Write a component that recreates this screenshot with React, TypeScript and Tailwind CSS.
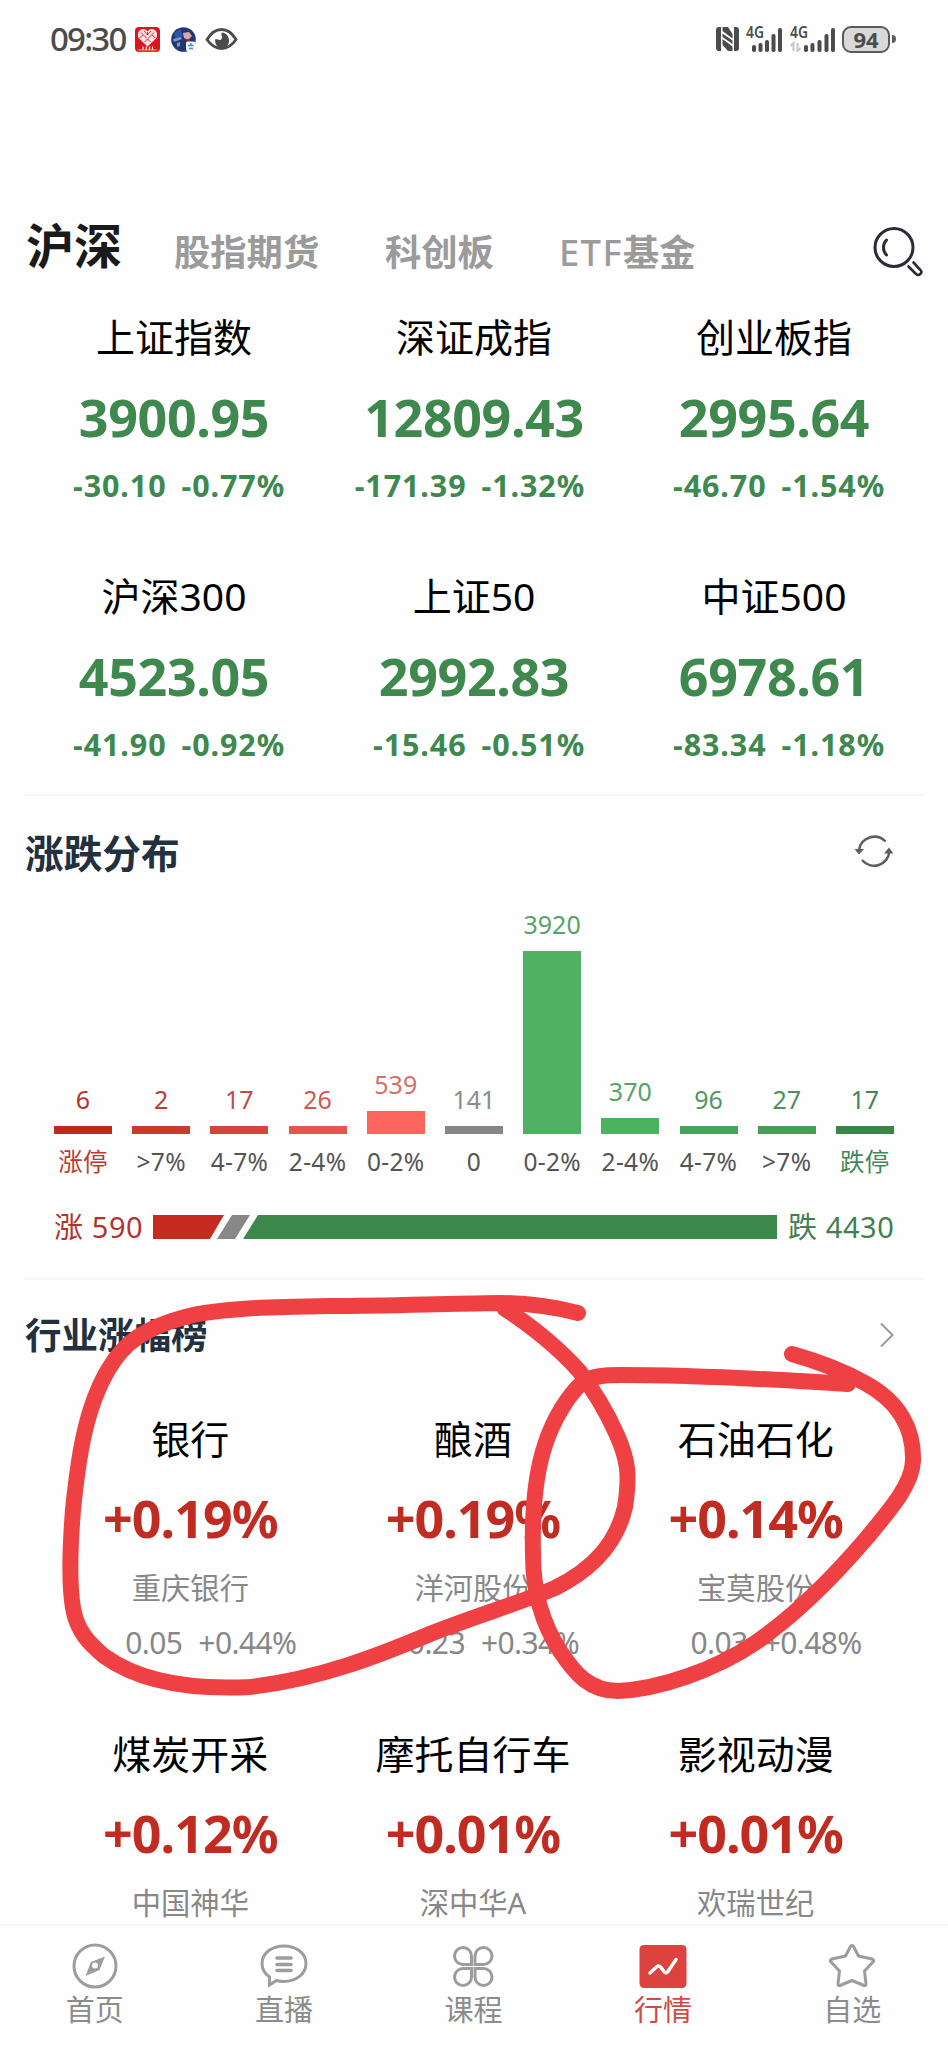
import React from "react";

type IndexItem = {
  name: string;
  value: string;
  diff: string;
  percent: string;
};

type IndustryItem = {
  name: string;
  percent: string;
  leader: string;
  diff?: string;
  leaderPercent?: string;
};

type BarItem = {
  count: number;
  label: string;
  height: number;
  bar: string;
  text: string;
  labelColor: string;
};

const indexes: IndexItem[] = [
  { name: "上证指数", value: "3900.95", diff: "-30.10", percent: "-0.77%" },
  { name: "深证成指", value: "12809.43", diff: "-171.39", percent: "-1.32%" },
  { name: "创业板指", value: "2995.64", diff: "-46.70", percent: "-1.54%" },
  { name: "沪深300", value: "4523.05", diff: "-41.90", percent: "-0.92%" },
  { name: "上证50", value: "2992.83", diff: "-15.46", percent: "-0.51%" },
  { name: "中证500", value: "6978.61", diff: "-83.34", percent: "-1.18%" },
];

const bars: BarItem[] = [
  { count: 6, label: "涨停", height: 8, bar: "bg-[#c1281d]", text: "text-[#b3332b]", labelColor: "text-[#bd3a32]" },
  { count: 2, label: ">7%", height: 8, bar: "bg-[#cb3a2f]", text: "text-[#b8403a]", labelColor: "text-[#555]" },
  { count: 17, label: "4-7%", height: 8, bar: "bg-[#d5453c]", text: "text-[#bf4c46]", labelColor: "text-[#555]" },
  { count: 26, label: "2-4%", height: 8, bar: "bg-[#e5554c]", text: "text-[#cf5a55]", labelColor: "text-[#555]" },
  { count: 539, label: "0-2%", height: 23, bar: "bg-[#fd665e]", text: "text-[#d4716c]", labelColor: "text-[#555]" },
  { count: 141, label: "0", height: 8, bar: "bg-[#868686]", text: "text-[#8c8c8c]", labelColor: "text-[#555]" },
  { count: 3920, label: "0-2%", height: 183, bar: "bg-[#50b063]", text: "text-[#57a468]", labelColor: "text-[#555]" },
  { count: 370, label: "2-4%", height: 16, bar: "bg-[#4cb25f]", text: "text-[#57a468]", labelColor: "text-[#555]" },
  { count: 96, label: "4-7%", height: 8, bar: "bg-[#48a25a]", text: "text-[#52985f]", labelColor: "text-[#555]" },
  { count: 27, label: ">7%", height: 8, bar: "bg-[#479c58]", text: "text-[#4e905b]", labelColor: "text-[#555]" },
  { count: 17, label: "跌停", height: 8, bar: "bg-[#3b8549]", text: "text-[#458453]", labelColor: "text-[#45875a]" },
];

const industries: IndustryItem[] = [
  { name: "银行", percent: "+0.19%", leader: "重庆银行", diff: "0.05", leaderPercent: "+0.44%" },
  { name: "酿酒", percent: "+0.19%", leader: "洋河股份", diff: "0.23", leaderPercent: "+0.34%" },
  { name: "石油石化", percent: "+0.14%", leader: "宝莫股份", diff: "0.03", leaderPercent: "+0.48%" },
  { name: "煤炭开采", percent: "+0.12%", leader: "中国神华" },
  { name: "摩托自行车", percent: "+0.01%", leader: "深中华A" },
  { name: "影视动漫", percent: "+0.01%", leader: "欢瑞世纪" },
];

const SignalBars: React.FC<{ xs: number[] }> = ({ xs }) => (
  <>
    {[7, 9, 12, 18, 24].map((h, i) => (
      <rect key={h} x={xs[i]} y={25 - h} width="4" height={h} rx="1.8" />
    ))}
  </>
);

const StatusBar = () => (
  <div className="flex h-[78px] items-center justify-between pl-[50px] pr-[52px] text-[#4c4c4c]">
    <div className="flex items-center">
      <span className="w-[85px] text-[33px] font-medium leading-10 tracking-[-1.800px]">09:30</span>
      <svg width="25" height="25" viewBox="0 0 25 25">
        <rect width="25" height="25" rx="4" fill="#dc1420" />
        <path d="M12.5 19.500 4 11.500C1 7.500 4 2 8 2c2 0 3.500 1 4.500 2.500C13.500 3 15 2 17 2c4 0 7 5.500 4 9.500z" fill="#fbe4e2" />
        <path d="M6 5.500l6 6M9 4l3.500 4M19 5.500l-6 6M16 4l-3.500 4M9.500 15l3-3 3 3M4.500 11l3.500-3M20.500 11L17 8M12.500 5v3" stroke="#dc1420" strokeWidth="0.9" fill="none" />
        <path d="M2 22h21l-2 2.500H4z" fill="#ee5a3c" />
        <path d="M8 19.500v3.500M11.300 19.500v3.500M14.500 19.500v3.500M17.500 19.500v3.500" stroke="#fff" strokeWidth="1.200" />
      </svg>
      <svg className="ml-[11px]" width="25" height="25" viewBox="0 0 25 25">
        <circle cx="12.500" cy="12.500" r="12.300" fill="#23366f" />
        <path d="M3 6l6-4 3 7-7 4z" fill="#2e55ad" />
        <path d="M12 6l6-1 3 4-4 4-4-2z" fill="#dfa6a2" />
        <path d="M2 12l8-2 1 2-8 3zM6 16l3-1v4l-3 1z" fill="#7f93c9" />
        <path d="M16 12l4 1-2 4-3-1z" fill="#8f2f38" />
        <rect x="15" y="14.500" width="9.500" height="9.500" rx="1.500" fill="#eef4fb" />
        <path d="M19.800 16v2M17 18.500h5.500M18 21.500h4" stroke="#4b8fd8" strokeWidth="1.500" />
      </svg>
      <svg className="ml-[9px]" width="33" height="25" viewBox="0 0 33 25">
        <path d="M2 12.500C6 6 11 2.500 16.500 2.500S27 6 31 12.500C27 18.500 22 21.500 16.500 21.500S6 18.500 2 12.500z" fill="none" stroke="currentColor" strokeWidth="2.800" />
        <path d="M17 5.500c-2 3 2 4.500-1 7-2 1.500-3.500-1-6 0 0 5 2.500 8.500 7 8.500 4.500 0 7-3.500 7-7.500 0-4.500-3-7.500-7-8z" fill="currentColor" />
      </svg>
    </div>

    <div className="flex items-center">
      <svg width="23" height="24" viewBox="0 0 23 24" fill="currentColor">
        <path d="M3 0h2v24H3a3 3 0 0 1-3-3V3a3 3 0 0 1 3-3zM18 0h2a3 3 0 0 1 3 3v18a3 3 0 0 1-3 3h-2z" />
        <path d="M6.500 0H12l4.500 7v4.500L6.500 4zM6.500 6.500l10 7v3.500l-10-7zM6.500 12l10 7.500V24H12l-5.500-6z" />
      </svg>
      <svg className="mb-3 ml-[7px]" width="38" height="37" viewBox="0 -12 38 37" fill="currentColor">
        <text x="0" y="11" fontSize="16" fontWeight="600" textLength="18" lengthAdjust="spacingAndGlyphs">4G</text>
        <SignalBars xs={[6, 12.5, 19, 25.5, 32]} />
      </svg>
      <svg className="mb-3 ml-[6px]" width="47" height="37" viewBox="0 -12 47 37" fill="currentColor">
        <text x="0" y="11" fontSize="16" fontWeight="600" textLength="18" lengthAdjust="spacingAndGlyphs">4G</text>
        <path d="M3.500 24v-8l-3 3M7.500 16v8l3-3" fill="none" stroke="#c6c6c6" strokeWidth="2" />
        <SignalBars xs={[14, 20.5, 27.5, 34.5, 41]} />
      </svg>
      <div className="ml-[5px] flex h-[27px] w-[48px] items-center justify-center rounded-[9px] border-2 border-[#5a5a5a] bg-[#d9d9d9] text-[22px] font-bold leading-none">
        94
      </div>
      <div className="ml-[2px] h-2 w-1 rounded-r bg-[#5a5a5a]" />
    </div>
  </div>
);

const MarketTabs = () => (
  <div className="mt-[133px] flex h-[70px] items-center pl-[26px] pr-6">
    <span className="w-[148px] text-[48px] font-bold leading-[60px] text-[#1a1a1a]">沪深</span>
    <div className="mt-3 flex h-[50px] flex-1 items-center text-[36.300px] font-bold leading-[50px] text-[#9b9b9b]">
      <span className="w-[211px]">股指期货</span>
      <span className="w-[174px]">科创板</span>
      <span>
        <span className="font-medium tracking-[1.400px]">ETF</span>基金
      </span>
    </div>
    <svg className="mt-3" width="52" height="52" viewBox="0 0 52 52" fill="none" stroke="#2b2b3a" strokeWidth="3" strokeLinecap="round">
      <circle cx="22" cy="21.500" r="19" />
      <path d="M14.500 14c-4 4-4 11 0 15" />
      <path d="M36.500 40.500l7.500 7.500c3 2.500 7-1 4.500-4l-7-7.500" strokeWidth="2.600" />
    </svg>
  </div>
);

const IndexCell: React.FC<{ item: IndexItem }> = ({ item }) => (
  <div className="text-center text-[#3f894f]">
    <div className="text-[39px] leading-[60px] text-black">{item.name}</div>
    <div className="mt-5 text-[52px] font-bold leading-[60px] tracking-[-0.400px]">{item.value}</div>
    <div className="mt-[18px] grid grid-cols-2 gap-[15px] text-[30.500px] font-bold leading-10 tracking-[0.900px]">
      <span className="flex justify-end">{item.diff}</span>
      <span className="flex">{item.percent}</span>
    </div>
  </div>
);

const Distribution = () => (
  <section>
    <div className="mt-[27px] flex h-[60px] items-center justify-between pl-[25px] pr-[54px]">
      <h2 className="text-[38.700px] font-bold leading-[60px] text-[#22303f]">涨跌分布</h2>
      <svg className="mb-1" width="40" height="36" viewBox="0 0 40 36" fill="none" stroke="#5f5f5f" strokeWidth="2.500">
        <path d="M31.500 8.500A15.500 15.500 0 0 0 5 17" />
        <path d="M8 27a15.500 15.500 0 0 0 27.500-9" />
        <path d="M.500 16h9.500L5 21.500zM30 20.500h9.500L35 14.500z" fill="#5f5f5f" stroke="none" />
      </svg>
    </div>

    {/* COUNT BARS */}
    <div className="flex h-[251px] items-end justify-between px-[54px]">
      {bars.map((item, i) => (
        <div key={i} className="flex w-[58px] flex-col items-center">
          <span className={`mb-[11px] text-[25px] leading-8 ${item.text}`}>{item.count}</span>
          <div className={`w-full ${item.bar}`} style={{ height: item.height }} />
        </div>
      ))}
    </div>
    <div className="mt-2 flex justify-between px-[54px]">
      {bars.map((item, i) => (
        <span
          key={i}
          className={`flex w-[58px] justify-center whitespace-nowrap text-[24.500px] leading-10 tracking-[0.300px] ${item.labelColor}`}
        >
          {item.label}
        </span>
      ))}
    </div>

    {/* UP / DOWN RATIO */}
    <div className="mt-[25px] flex h-10 items-center pl-[54px] text-[29px] leading-10 tracking-[0.600px]">
      <span className="w-[99px] text-[#b3342c]">涨 590</span>
      <svg width="624" height="24" viewBox="0 0 624 24">
        <path d="M0 0h71L57 24H0z" fill="#c62b1f" />
        <path d="M79 0h18L82 24H64z" fill="#888" />
        <path d="M105 0h519v24H90z" fill="#3d884b" />
      </svg>
      <span className="ml-[11px] text-[#437f50]">跌 4430</span>
    </div>
  </section>
);

const IndustryCell: React.FC<{ item: IndustryItem }> = ({ item }) => (
  <div className="text-center text-[#888]">
    <div className="text-[39px] leading-[60px] text-black">{item.name}</div>
    <div className="mt-[19px] text-[52px] font-bold leading-[60px] tracking-[-1px] text-[#c12c22]">{item.percent}</div>
    <div className="mt-5 text-[29.300px] leading-10">{item.leader}</div>
    <div className="mt-[15px] grid h-10 grid-cols-2 gap-4 text-[30px] leading-10 tracking-[-0.600px]">
      <span className="flex justify-end">{item.diff}</span>
      <span className="flex">{item.leaderPercent}</span>
    </div>
  </div>
);

/* hand-drawn marker circles laid over the industry list */
const MarkerStrokes = () => (
  <svg
    className="pointer-events-none absolute left-0 top-[1280px]"
    width="948"
    height="440"
    viewBox="0 0 948 440"
    fill="none"
    stroke="#ef4143"
    strokeWidth="16"
    strokeLinecap="round"
    strokeLinejoin="round"
  >
    <path d="M578 33C550 26 525 23 500 23C430 24 390 26 330 26C270 27 220 28 185 37C145 48 124 62 108 90C85 129 78 180 73 230C69 280 70 310 73 328C77 352 90 364 104 376C140 402 190 410 250 407C320 399 380 375 430 354C475 336 520 323 555 308C595 288 617 262 625 227C630 195 628 180 617 155C605 128 594 112 580 92C560 69 528 43 505 29" />
    <path d="M792 74C820 82 845 92 865 103C900 122 914 150 913 181C912 205 890 230 865 260C835 295 800 332 755 363C715 390 660 409 618 411C590 411 575 394 560 371C540 340 533 305 533 275C532 235 535 195 545 165C553 140 568 115 583 102C593 96 605 95 620 95C690 95 770 99 848 104" />
  </svg>
);

const tabs = [
  {
    label: "首页",
    active: false,
    icon: (
      <>
        <circle cx="24" cy="24" r="21" />
        <path d="M34 14.500L28.500 28 14.500 34 20 20zM24 20.500a3 3 0 1 0 0 6 3 3 0 0 0 0-6z" fill="currentColor" fillRule="evenodd" stroke="none" />
      </>
    ),
  },
  {
    label: "直播",
    active: false,
    icon: (
      <>
        <path d="M9.500 35C4.500 31.500 2 27 2 21.500 2 11 12 4 24 4s22 7 22 17.500S36 39.500 24 39.500c-3 0-5.500-.300-7.500-1L9.500 43z" />
        <path d="M17 16h14M17 22.500h14M17 28.500h14" strokeWidth="3.600" strokeLinecap="round" />
      </>
    ),
  },
  {
    label: "课程",
    active: false,
    icon: (
      <path d="M22.500 22.500H14a8.500 8.500 0 1 1 8.500-8.500zM26 22.500h8.500a8.500 8.500 0 1 0-8.500-8.500zM22.500 26.500H14a8.500 8.500 0 1 0 8.500 8.500zM26 26.500h8.500a8.500 8.500 0 1 1-8.500 8.500z" />
    ),
  },
  {
    label: "行情",
    active: true,
    icon: (
      <>
        <rect x="0.500" y="3" width="47" height="43" rx="4.500" fill="#dc423e" stroke="none" />
        <path d="M11 31l7-6.500c1.500-1 2.500-.500 3.500.500l4 5c1 1 2.500 1 3.500-.500L37 17.500" stroke="#fff" strokeWidth="3.400" strokeLinecap="round" />
      </>
    ),
  },
  {
    label: "自选",
    active: false,
    icon: (
      <path d="M22.500 4.500c.700-1.500 2.300-1.500 3 0l5 9.500 13.500 3c2 .500 2 2 1 3L36.500 29l1.500 13c.200 1.500-1 2-2 1.500L24 38.500 12 43.500c-1 .500-2.200 0-2-1.500l1.500-13L3 20c-1-1-1-2.500 1-3l13.500-3z" strokeLinejoin="round" />
    ),
  },
];

const BottomNav = () => (
  <nav className="mr-px grid h-[122px] grid-cols-5">
    {tabs.map((tab) => (
      <div
        key={tab.label}
        className={`flex flex-col items-center pt-4 ${tab.active ? "text-[#cf4b47]" : "text-[#8c8c8c]"}`}
      >
        <svg
          width="48"
          height="48"
          viewBox="0 0 48 48"
          fill="none"
          stroke="currentColor"
          strokeWidth="3"
          className={tab.active ? "" : "text-[#9d9d9d]"}
        >
          {tab.icon}
        </svg>
        <span className="text-[29px] leading-10">{tab.label}</span>
      </div>
    ))}
  </nav>
);

const Divider = () => <div className="mx-6 h-[2px] bg-[#f8f8f8]" />;

const App: React.FC = () => {
  return (
    <div className="relative h-[2048px] w-[948px] overflow-hidden bg-[#fefefe] font-['Noto_Sans','Noto_Sans_CJK_SC',sans-serif]">
      <main className="h-[1926px] overflow-hidden border-b-2 border-[#f8f8f8]">
        <StatusBar />
        <MarketTabs />

        <section className="mt-[26px] grid grid-cols-3 gap-y-[61px] px-6 pb-[30px]">
          {indexes.map((item) => (
            <IndexCell key={item.name} item={item} />
          ))}
        </section>
        <Divider />

        <Distribution />
        <div className="h-[31px]" />
        <Divider />

        {/* INDUSTRY RANKING */}
        <section>
          <div className="mt-[25px] flex h-[60px] items-center justify-between pl-[25px] pr-[54px]">
            <h2 className="text-[36.500px] font-bold leading-[60px] text-[#22303f]">行业涨幅榜</h2>
            <svg width="14" height="26" viewBox="0 0 14 26" fill="none" stroke="#9a9a9a" strokeWidth="2">
              <path d="M1 1.500L12.500 13 1 24.500" />
            </svg>
          </div>
          <div className="mt-11 grid grid-cols-3 gap-y-[61px] pl-[49px] pr-[51px]">
            {industries.map((item) => (
              <IndustryCell key={item.name} item={item} />
            ))}
          </div>
        </section>
      </main>

      <BottomNav />
      <MarkerStrokes />
    </div>
  );
};

export default App;
